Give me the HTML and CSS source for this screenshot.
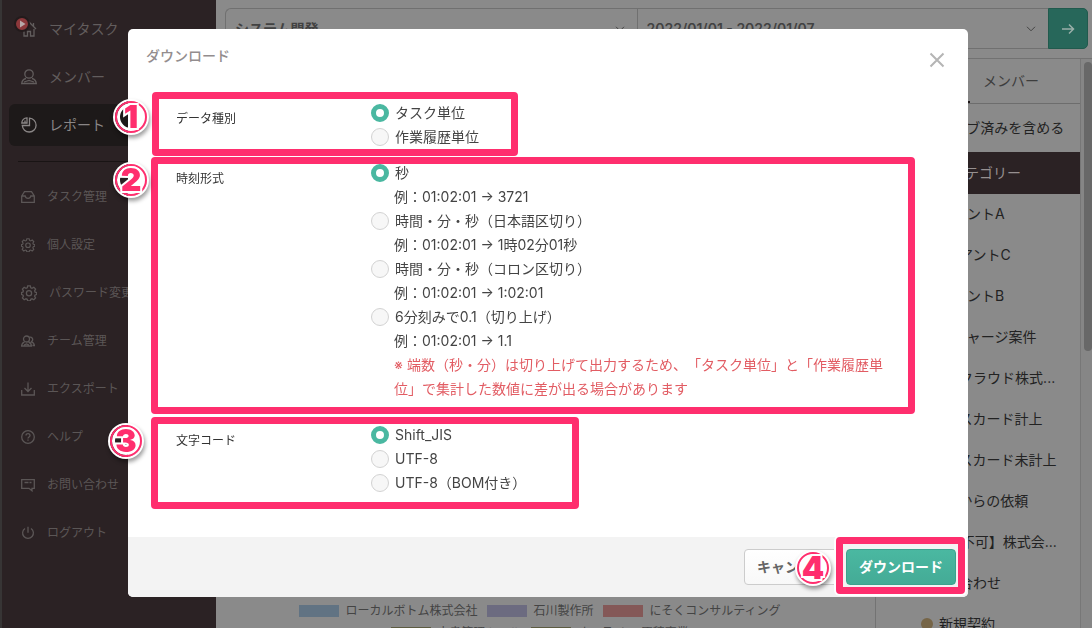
FILE: index.html
```html
<!DOCTYPE html>
<html lang="ja">
<head>
<meta charset="utf-8">
<meta name="viewport" content="width=device-width, initial-scale=1">
<title>ダウンロード</title>
<link rel="stylesheet" href="styles.css">
</head>
<body>
<div class="app">
  <nav class="sidebar">
    <a class="nav-item" href="#">
      <span class="nav-icon"><svg width="16" height="16" viewBox="0 0 16 16"><path d="M1 8 8 1l7 7M12.500 2v3M3 8v7h3.500v-4.500h3V15H13V8"/></svg><span class="play"><svg width="7" height="8" viewBox="0 0 7 8"><path d="M1 0.500v7L6.500 4z"/></svg></span></span>マイタスク</a>
    <a class="nav-item" href="#">
      <span class="nav-icon"><svg width="16" height="16" viewBox="0 0 16 16"><circle cx="8" cy="5" r="4.200"/><path d="M5 9.500c-2.500.6-4 2-4.300 5h14.600c-.3-3-1.800-4.400-4.300-5M3 13l5-1.500 5 1.500"/></svg></span>メンバー</a>
    <a class="nav-item nav-item-active" href="#">
      <span class="nav-icon"><svg width="16" height="16" viewBox="0 0 16 16"><path d="M8.500 1.200A6.900 6.900 0 1 1 1.300 8.500H8.500zM6 .8V6H.8C.8 3.200 3 .8 6 .8zM4 3.500v2.500"/></svg></span>レポート</a>
    <hr class="nav-line">
    <a class="nav-item nav-item-small" href="#">
      <span class="nav-icon"><svg width="14" height="14" viewBox="0 0 14 14"><path d="M.7 6 3.500 1.700h7L13.300 6v6.300H.7zM.7 6h3.500c.3 1.700 1.200 2.300 2.800 2.300S9.500 7.700 9.800 6h3.500"/></svg></span>タスク管理</a>
    <a class="nav-item nav-item-small" href="#">
      <span class="nav-icon"><svg width="14" height="14" viewBox="0 0 16 16"><path d="M6.700.8h2.600l.5 2 1.200.5 1.800-1 1.800 1.800-1 1.800.5 1.200 1.600.4v2l-1.600.5-.5 1.200 1 1.800-1.800 1.800-1.800-1-1.200.5-.5 1.600H6.700l-.5-1.600-1.200-.5-1.800 1L1.400 13l1-1.800L1.900 10l-1.400-.5v-2l1.400-.4.5-1.200-1-1.800 1.800-1.800 1.800 1 1.200-.5z"/><circle cx="8" cy="8.300" r="2.600"/></svg></span>個人設定</a>
    <a class="nav-item nav-item-small" href="#">
      <span class="nav-icon"><svg width="16" height="16" viewBox="0 0 16 16"><path d="M6.700.8h2.600l.5 2 1.200.5 1.800-1 1.800 1.800-1 1.800.5 1.200 1.600.4v2l-1.600.5-.5 1.200 1 1.800-1.800 1.800-1.800-1-1.200.5-.5 1.600H6.700l-.5-1.600-1.200-.5-1.800 1L1.400 13l1-1.800L1.900 10l-1.400-.5v-2l1.400-.4.5-1.200-1-1.800 1.800-1.800 1.800 1 1.200-.5z"/><circle cx="8" cy="8.300" r="2.600"/></svg></span>パスワード変更</a>
    <a class="nav-item nav-item-small" href="#">
      <span class="nav-icon"><svg width="14" height="14" viewBox="0 0 14 14"><circle cx="5.500" cy="5" r="3"/><path d="M3.500 8C1.700 8.500.7 9.700.6 12h9.800c-.1-2.300-1.100-3.500-2.900-4M8.500 3.200a2.400 2.400 0 1 1 1.500 4.600c2 .3 3.200 1.500 3.400 3.700h-2M3 11l2.500-1L8 11"/></svg></span>チーム管理</a>
    <a class="nav-item nav-item-small" href="#">
      <span class="nav-icon"><svg width="14" height="14" viewBox="0 0 14 14"><path d="M7 .5v9M3.500 6 7 9.500 10.500 6M.7 8v5h12.600V8"/></svg></span>エクスポート</a>
    <a class="nav-item nav-item-small" href="#">
      <span class="nav-icon"><svg width="14" height="14" viewBox="0 0 14 14"><circle cx="7" cy="7" r="6.300"/><path d="M5 5.500C5 3 9 3 9 5.500 9 7 7 7 7 8.500M7 9.500v1.300"/></svg></span>ヘルプ</a>
    <a class="nav-item nav-item-small" href="#">
      <span class="nav-icon"><svg width="14" height="14" viewBox="0 0 14 14"><path d="M.7 1.700h12.600v8.600H11v2.500L8 10.300H.7zM3.500 4.500h4M8.500 4.500h2"/></svg></span>お問い合わせ</a>
    <a class="nav-item nav-item-small" href="#">
      <span class="nav-icon"><svg width="14" height="14" viewBox="0 0 14 14"><path d="M7 .8v6M4 2.500a5.400 5.400 0 1 0 6 0"/></svg></span>ログアウト</a>
  </nav>

  <main class="main">
    <form class="filters">
      <label class="picker"><select aria-label="プロジェクト"><option>システム開発</option></select><svg width="10" height="6" viewBox="0 0 10 6"><path d="m1 .8 4 4 4-4"/></svg></label>
      <label class="picker"><select aria-label="期間"><option>2022/01/01 - 2022/01/07</option></select><svg width="10" height="6" viewBox="0 0 10 6"><path d="m1 .8 4 4 4-4"/></svg></label>
      <button class="go" type="button" aria-label="表示"><svg width="14" height="12" viewBox="0 0 14 12"><path d="M1 6h11.500M8 1.500 12.500 6 8 10.500"/></svg></button>
    </form>
    <div class="content">
      <section class="chart">
        <ul class="legend">
          <li><i class="swatch blue"></i>ローカルボトム株式会社</li>
          <li><i class="swatch violet"></i>石川製作所</li>
          <li><i class="swatch red"></i>にそくコンサルティング</li>
        </ul>
        <ul class="legend">
          <li><i class="swatch olive"></i>文書管理ツール</li>
          <li><i class="swatch olive"></i>オンライン 原稿事業</li>
        </ul>
      </section>
      <aside class="panel">
        <div class="tabs"><button class="tab tab-active" type="button" aria-label="カテゴリー"></button><button class="tab" type="button">メンバー</button></div>
        <p class="archive">アーカイブ済みを含める</p>
        <h2 class="panel-head">カテゴリー</h2>
        <ul class="rows">
          <li><i class="dot"></i>イベントA</li>
          <li><i class="dot"></i>IoTアントC</li>
          <li><i class="dot"></i>イベントB</li>
          <li><i class="dot"></i>リチャージ案件</li>
          <li><i class="dot"></i>IoTクラウド株式...</li>
          <li><i class="dot"></i>VCスカード計上</li>
          <li><i class="dot"></i>VCスカード未計上</li>
          <li><i class="dot"></i>HPからの依頼</li>
          <li><i class="dot"></i>【x不可】株式会...</li>
          <li><i class="dot"></i>QA合わせ</li>
          <li><i class="dot"></i>新規契約</li>
        </ul>
      </aside>
      <div class="scroll"><div class="thumb"></div></div>
    </div>
  </main>
</div>

<div class="overlay">
  <form class="modal" role="dialog" aria-labelledby="title">
    <header class="modal-head">
      <h1 id="title">ダウンロード</h1>
      <button class="close" type="button" aria-label="閉じる"><svg width="16" height="16" viewBox="0 0 16 16"><path d="m1.500 1.500 13 13M14.500 1.500l-13 13"/></svg></button>
    </header>
    <div class="modal-body">
      <div class="group" role="radiogroup" aria-labelledby="kind">
        <span class="group-name" id="kind">データ種別</span>
        <div class="options">
          <label><input type="radio" name="kind" checked>タスク単位</label>
          <label><input type="radio" name="kind">作業履歴単位</label>
        </div>
        <div class="mark mark-one"></div><span class="badge badge-one">1</span>
      </div>
      <div class="group" role="radiogroup" aria-labelledby="time">
        <span class="group-name" id="time">時刻形式</span>
        <div class="options">
          <label><input type="radio" name="time" checked>秒</label>
          <p>例：01:02:01 → 3721</p>
          <label><input type="radio" name="time">時間・分・秒（日本語区切り）</label>
          <p>例：01:02:01 → 1時02分01秒</p>
          <label><input type="radio" name="time">時間・分・秒（コロン区切り）</label>
          <p>例：01:02:01 → 1:02:01</p>
          <label><input type="radio" name="time">6分刻みで0.1（切り上げ）</label>
          <p>例：01:02:01 → 1.1</p>
          <p class="note">※ 端数（秒・分）は切り上げて出力するため、「タスク単位」と「作業履歴単位」で集計した数値に差が出る場合があります</p>
        </div>
        <div class="mark mark-two"></div><span class="badge badge-two">2</span>
      </div>
      <div class="group group-last" role="radiogroup" aria-labelledby="code">
        <span class="group-name" id="code">文字コード</span>
        <div class="options">
          <label><input type="radio" name="code" checked>Shift_JIS</label>
          <label><input type="radio" name="code">UTF-8</label>
          <label><input type="radio" name="code">UTF-8（BOM付き）</label>
        </div>
        <div class="mark mark-three"></div><span class="badge badge-three">3</span>
      </div>
    </div>
    <footer class="modal-foot">
      <button class="btn" type="button">キャンセル</button>
      <div class="submit">
        <button class="btn btn-primary" type="button">ダウンロード</button>
        <div class="mark mark-four"></div><span class="badge badge-four">4</span>
      </div>
    </footer>
  </form>
</div>
</body>
</html>
```
FILE: styles.css
```css
* { box-sizing: border-box; }
body {
  margin: 0;
  height: 100vh;
  overflow: hidden;
  font: 14px/24px Inter, "Noto Sans CJK JP", sans-serif;
  text-spacing-trim: space-all;
  color: #222;
  background: #8a8a8a;
}
h1, h2, p, ul { margin: 0; padding: 0; font-size: 14px; font-weight: 400; list-style: none; }
button, select, input { font: inherit; margin: 0; }
svg { fill: none; stroke: currentColor; flex: none; }

.app { display: flex; height: 100vh; }

.sidebar {
  flex: none;
  width: 216px;
  padding: 8px 9px 0 7px;
  border-left: 2px solid #373535;
  background: #2b2224;
  display: flex;
  flex-direction: column;
  gap: 6px;
}
.nav-item {
  flex: none;
  height: 42px;
  padding-left: 12px;
  display: flex;
  align-items: center;
  gap: 12px;
  border-radius: 6px;
  color: #625d5d;
  text-decoration: none;
  white-space: nowrap;
}
.nav-item-active { background: #1d1919; color: #8a8686; }
.nav-item-small { font-size: 12px; color: #5b5656; }
.nav-icon { display: flex; position: relative; }
.nav-icon > svg { stroke-width: 1.3; }
.play {
  position: absolute;
  left: -7px;
  top: -5px;
  width: 16px;
  height: 16px;
  border: 2px solid #231b1c;
  border-radius: 50%;
  background: #8c383b;
  display: flex;
  align-items: center;
  justify-content: center;
  color: #b9a9a9;
}
.play svg { fill: currentColor; stroke: none; }
.nav-line { width: 190px; height: 1px; margin: 9px 0 8px 9px; border: 0; background: #191414; }

.main { flex: 1; min-width: 0; display: flex; flex-direction: column; }
.filters { flex: none; display: flex; height: 59px; padding: 8px 4px 9px 9px; border-bottom: 1px solid #727272; }
.picker {
  flex: 1;
  display: flex;
  align-items: center;
  padding: 0 12px 0 9px;
  border: 1px solid #707070;
  border-right: 0;
  color: #444;
}
.picker:first-child { border-radius: 6px 0 0 6px; }
.picker select {
  flex: 1;
  appearance: none;
  padding: 0;
  border: 0;
  background: none;
  color: #424242;
  font-weight: 600;
}
.go {
  width: 40px;
  padding: 0;
  display: flex;
  align-items: center;
  justify-content: center;
  border: 1px solid #215a4d;
  border-radius: 0 5px 5px 0;
  background: #27675a;
  color: #9aafa9;
}
.go svg { stroke-width: 1.5; }

.content { flex: 1; min-height: 0; display: flex; }
.chart { flex: 1; display: flex; flex-direction: column; justify-content: flex-end; padding-right: 11px; margin-bottom: -16px; }
.legend { display: flex; justify-content: center; gap: 10px; font-size: 12px; line-height: 22px; color: #444; }
.legend li { display: flex; align-items: center; gap: 6px; }
.swatch { width: 40px; height: 12px; }
.blue { background: #617383; }
.violet { background: #6c6b80; }
.red { background: #845857; }
.olive { background: #5d5c42; }

.panel { flex: none; width: 205px; border-left: 1px solid #737373; }
.tabs { display: flex; height: 45px; border-bottom: 1px solid #6d6d6d; }
.tab { width: 82px; padding: 0; border: 0; background: none; color: #3d3d3d; }
.tab-active { width: 94px; border-bottom: 2px solid #1c1516; }
.archive { padding: 12px 0 12px 35px; height: 48px; white-space: nowrap; }
.panel-head { padding: 9px 0 9px 75px; background: #2b2224; color: #969090; }
.rows li { display: flex; align-items: center; gap: 6px; height: 41px; padding: 0 0 2px 45px; white-space: nowrap; }
.dot { width: 12px; height: 12px; border-radius: 50%; background: #766547; }
.scroll { flex: none; width: 12px; padding: 3px 0 0 3px; border-left: 1px solid #777; background: #868686; }
.thumb { height: 289px; border-radius: 4px; background: #686868; }

.overlay {
  position: fixed;
  inset: 0;
  display: flex;
  justify-content: center;
  align-items: flex-start;
  padding: 29px 0 0 4px;
}
.modal { width: 840px; border-radius: 5px; background: #fff; color: #444; }
.modal-head { display: flex; justify-content: space-between; padding: 15px 22px 0 18px; height: 72px; }
.modal-head h1 { color: #938d8e; font-weight: 500; }
.close { width: 18px; height: 32px; padding: 0; border: 0; background: none; color: #b5b5b5; }
.close svg { display: block; margin: auto; stroke-width: 2; }
.modal-body { padding-bottom: 42px; }
.group {
  position: relative;
  display: grid;
  grid-template-columns: 195px 1fr;
  padding: 0 76px 0 48px;
  margin-bottom: 12px;
}
.group-last { margin: 22px 0 0; }
.group-name { padding-top: 6px; font-size: 12px; color: #333; }
.options label { display: flex; align-items: center; gap: 6px; }
.options p { padding-left: 23px; }
.options .note { color: #e25c63; }
.options input {
  appearance: none;
  width: 18px;
  height: 18px;
  border: 1px solid #d2d2d2;
  border-radius: 50%;
  background: #f7f7f7;
}
.options input:checked { border: 5px solid #4ab8a1; background: #fff; }

.modal-foot {
  display: flex;
  justify-content: flex-end;
  gap: 6px;
  padding: 12px 12px 12px 0;
  border-radius: 0 0 5px 5px;
  background: #f3f3f3;
}
.btn {
  height: 36px;
  padding: 0 12px;
  border: 1px solid #ccc;
  border-radius: 4px;
  background: linear-gradient(#fff, #f8f8f8);
  color: #666;
  font-weight: 600;
}
.btn-primary { border-color: #3ca28d; background: linear-gradient(#4ab8a1, #44ab96); color: #fff; }
.submit { position: relative; display: flex; }

.mark {
  position: absolute;
  border: 7px solid #ff2e6e;
  border-radius: 4px;
  box-shadow: 0 0 0 1px #ffffffb0;
  pointer-events: none;
}
.mark-one { left: 24px; top: -9px; width: 366px; height: 64px; }
.mark-two { left: 23px; top: -4px; width: 764px; height: 257px; }
.mark-three { left: 23px; top: -6px; width: 428px; height: 92px; }
.mark-four { left: -10px; right: -9px; top: -12px; bottom: -9px; box-shadow: 0 0 0 2px #fff; }
.badge {
  position: absolute;
  width: 32px;
  height: 32px;
  border: 2px solid #ff2e6e;
  border-radius: 50%;
  box-shadow: 0 0 0 2px #fff, inset 0 0 0 3px #fff, 1px 3px 4px 2px #0006;
  color: #ff2e6e;
  font-size: 32px;
  font-weight: 900;
  line-height: 28px;
  text-align: center;
  -webkit-text-stroke: 4px #fff;
  paint-order: stroke fill;
}
.badge-one { left: -13px; top: 0; }
.badge-two { left: -13px; top: 3px; }
.badge-three { left: -18px; top: 2px; }
.badge-four { left: -49px; top: 3px; background: #fff; }
```
